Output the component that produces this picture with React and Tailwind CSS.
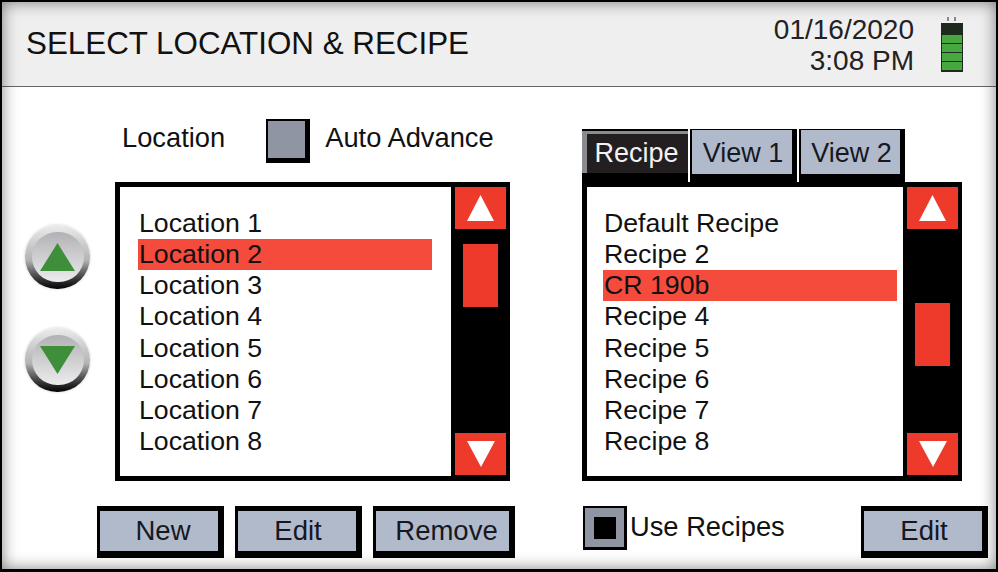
import React from 'react';

const locations = ['Location 1', 'Location 2', 'Location 3', 'Location 4', 'Location 5', 'Location 6', 'Location 7', 'Location 8'];
const recipes = ['Default Recipe', 'Recipe 2', 'CR 190b', 'Recipe 4', 'Recipe 5', 'Recipe 6', 'Recipe 7', 'Recipe 8'];

// plain triangle used on scroll buttons and round arrow buttons
function Triangle({ down, className, fill }) {
  return (
    <svg viewBox="0 0 28 26" preserveAspectRatio="none" className={className}>
      <polygon points={down ? '0,0 28,0 14,26' : '14,0 28,26 0,26'} fill={fill} />
    </svg>
  );
}

function ScrollList({ items, selected, boxClass, listClass, barClass, thumbClass }) {
  return (
    <div className={`flex h-[299px] border-[5px] border-r-4 border-black bg-white ${boxClass}`}>
      <ul className={`flex-1 pt-[21px] text-[26.7px] leading-[31.15px] text-[#111] ${listClass}`}>
        {items.map((item, i) => (
          <li key={item} className={i === selected ? 'bg-[#f44b3d] pl-[1px]' : 'pl-[1px]'}>
            {item}
          </li>
        ))}
      </ul>
      <div className={`flex flex-col bg-black pl-1 ${barClass}`}>
        <button className="flex h-[42px] w-[51px] items-center justify-center bg-[#ee3a2a]">
          <Triangle className="h-[26px] w-[27px]" fill="#ffffff" />
        </button>
        <div className={`ml-2 w-[35px] bg-[#ee3a2a] ${thumbClass}`} />
        <button className="mt-auto mb-[1px] flex h-[42px] w-[51px] items-center justify-center bg-[#ee3a2a]">
          <Triangle down className="h-[26px] w-[28px]" fill="#ffffff" />
        </button>
      </div>
    </div>
  );
}

function ActionButton({ label, width }) {
  return (
    <button className={`flex h-[52px] items-center justify-center border-t-[5px] border-r-[6px] border-b-[7px] border-l-[3px] border-black bg-[#b1bacb] text-[27.5px] text-[#15181f] ${width}`}>
      {label}
    </button>
  );
}

function RoundArrow({ down }) {
  return (
    <button className="flex h-[64px] w-[65px] items-center justify-center rounded-full bg-linear-to-b from-[#ececec] via-[#b4b4b4] via-55% to-[#050505] shadow-[0_0_3px_rgba(0,0,0,0.2)]">
      <span className="flex h-[50px] w-[52px] items-center justify-center rounded-full bg-linear-to-b from-[#b2b2b6] to-[#ececee]">
        <Triangle down={down} className="h-[28px] w-[35px]" fill="#3f8e3a" />
      </span>
    </button>
  );
}

function Battery() {
  return (
    <svg viewBox="0 0 22 56" className="h-[56px] w-[22px]">
      <rect x="6" y="1" width="2" height="4" fill="#8a8a8a" />
      <rect x="13" y="1" width="2" height="4" fill="#8a8a8a" />
      <rect x="0" y="7" width="22" height="49" fill="#1f2a1f" />
      <rect x="1" y="19" width="20" height="8" fill="#46a83e" />
      <rect x="1" y="28" width="20" height="8" fill="#46a83e" />
      <rect x="1" y="37" width="20" height="8" fill="#46a83e" />
      <rect x="1" y="46" width="20" height="8" fill="#46a83e" />
    </svg>
  );
}

function Tab({ label, active, width }) {
  if (active) {
    return (
      <div className={`h-[53px] bg-black pt-[2px] ${width}`}>
        <div className="flex h-[42px] items-center justify-center border-t-[3px] border-l-[5px] border-[#8b8b90] bg-[#231f20] pr-[2px] text-[27px] text-[#f2f2f2]">
          {label}
        </div>
      </div>
    );
  }
  return (
    <div className={`flex h-[53px] items-center justify-center border-t border-r-[5px] border-b-[8px] border-l-2 border-black bg-[#b1bacb] text-[27px] text-[#15181f] ${width}`}>
      <span className="mt-[3px] ml-[2px]">{label}</span>
    </div>
  );
}

export default function App() {
  return (
    <div className="relative h-[572px] w-[998px] overflow-hidden border-t-2 border-r-2 border-b-[3px] border-l-2 border-black bg-white font-['Liberation_Sans',sans-serif] text-[#111]">
      {/* Title bar */}
      <header className="flex h-[85px] items-center justify-between border-b border-[#666] bg-[#efefef] pr-[33px] pl-6">
        <h1 className="text-[31.35px] font-normal">SELECT LOCATION &amp; RECIPE</h1>
        <div className="flex items-center gap-[27px]">
          <div className="pt-[2px] text-right text-[28px] leading-[31px] text-[#222]">
            <div>01/16/2020</div>
            <div>3:08 PM</div>
          </div>
          <Battery />
        </div>
      </header>

      <main className="flex pl-[23px]">
        {/* Round up and down arrows */}
        <div className="flex w-[65px] flex-col gap-[39px] pt-[138px]">
          <RoundArrow />
          <RoundArrow down />
        </div>

        {/* Location column */}
        <section className="ml-[7px] w-[418px] pt-8">
          <div className="flex h-[44px] items-center pl-[25px] text-[27.3px]">
            <span className="mb-[6px]">Location</span>
            <span className="ml-[41px] h-[44px] w-[44px] border-t-2 border-r-[5px] border-b-[5px] border-l-2 border-black bg-[#8f95a3]" />
            <span className="mb-[6px] ml-[15px]">Auto Advance</span>
          </div>
          <ScrollList
            items={locations}
            selected={1}
            boxClass="mt-[19px] ml-[18px] w-[395px]"
            listClass="pl-[18px] pr-[19px]"
            barClass="w-[55px]"
            thumbClass="mt-[15px] h-[63px]"
          />
          <div className="mt-[25px] flex gap-[11px]">
            <ActionButton label="New" width="w-[127px] pl-2" />
            <ActionButton label="Edit" width="w-[127px] pl-[2px]" />
            <ActionButton label="Remove" width="w-[142px] pl-2" />
          </div>
        </section>

        {/* Recipe column */}
        <section className="ml-[67px] w-[406px] pt-[42px]">
          <div className="flex gap-[2px]">
            <Tab label="Recipe" active width="w-[106px]" />
            <Tab label="View 1" width="w-[107px]" />
            <Tab label="View 2" width="w-[106px]" />
          </div>
          <ScrollList
            items={recipes}
            selected={2}
            boxClass="w-[380px]"
            listClass="pl-[16px] pr-[6px]"
            barClass="w-[55px]"
            thumbClass="mt-[74px] h-[63px]"
          />
          <div className="mt-[25px] flex items-start justify-between">
            <div className="flex items-center text-[27.3px]">
              <span className="ml-[1px] flex h-[44px] w-[44px] items-center justify-center border-t-2 border-r-[3px] border-b-[3px] border-l-2 border-black bg-[#8f95a3]">
                <span className="h-[22px] w-[22px] bg-black" />
              </span>
              <span className="mb-[2px] ml-[3px]">Use Recipes</span>
            </div>
            <ActionButton label="Edit" width="w-[127px] pl-[2px]" />
          </div>
        </section>
      </main>

      {/* Soft bezel shadow over the whole screen */}
      <div className="pointer-events-none absolute inset-0 shadow-[inset_0_0_16px_rgba(0,0,0,0.5)]" />
    </div>
  );
}
